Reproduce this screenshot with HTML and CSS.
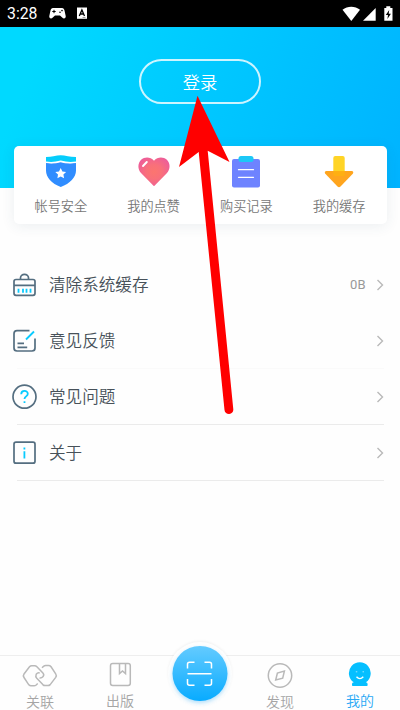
FILE: index.html
```html
<!DOCTYPE html>
<html lang="zh-CN">
<head>
<meta charset="utf-8">
<title>我的</title>
<link rel="stylesheet" href="styles.css">
</head>
<body>
<div class="phone">
  <div class="status">
    <span class="time">3:28</span>
    <svg class="status-left" viewBox="48 5 42 18" width="42" height="18">
      <path d="M53 8h9c1.500 0 2.100 1 2.500 2.500l1.200 5.500c.4 2.500-2 3.200-3.500 1.600L60 15.500h-5L52.800 17.600c-1.500 1.600-3.900.9-3.500-1.600l1.200-5.500C50.900 9 51.500 8 53 8z" fill="#fff"/>
      <path d="M52.300 11.500h3.400M54 9.800v3.400" stroke="#000" stroke-width="1"/>
      <circle cx="60" cy="12.300" r=".8"/><circle cx="62" cy="10.600" r=".8"/>
      <path d="M77 7.500h10v11.300H77z" fill="#fff"/>
      <path d="M79.300 16l2.600-6 2.600 6M80.300 14h3.200" fill="none" stroke="#000" stroke-width="1.300"/>
      <path d="M82.500 17.500h3" stroke="#777" stroke-width=".7"/>
    </svg>
    <svg class="status-right" viewBox="341 4 54 18" width="54" height="18">
      <path d="M342.500 8.800c5-4 12.500-4 17.500 0L351.300 20z" fill="#fff"/>
      <path d="M363 19.700h12.700V7z" fill="#fff"/>
      <path d="M384.300 7h2V5.300h4V7h2.200v12.700h-8.200z" fill="#fff"/>
      <path d="M389.200 9l-3.400 5h2.200l-.6 4 3.500-5.200h-2.200z"/>
    </svg>
  </div>
  <header class="hero"><button class="login">登录</button></header>
  <nav class="card">
    <a class="shortcut">
      <svg viewBox="44 153 34 36" width="34" height="36">
        <path d="M46 157q4.500 0 7.500-.7 4-1 7.200-1t7.200 1q3 .7 8.100.7v5H46z" fill="#05cdfc"/>
        <path d="M46 163q7.500 1.200 14.500-.8 7 2 15.500.8v7.500c0 7-6 13-15.200 16.500C51.500 183.500 46 177.500 46 170.500z" fill="#308dff"/>
        <path d="M45.800 162.200q7.500 1.200 14.900-1 7.500 2.200 15.500 1" fill="none" stroke="#fff" stroke-width="1.200"/>
        <path d="M60.700 168l1.700 3.400 3.700.5-2.700 2.600.7 3.700-3.400-1.700-3.300 1.700.6-3.700-2.700-2.600 3.700-.5z" fill="#fff"/>
      </svg><span>帐号安全</span>
    </a>
    <a class="shortcut">
      <svg viewBox="136.500 153 34 36" width="34" height="36">
        <defs><radialGradient id="heart" cx="50%" cy="50%" r="55%"><stop offset="0" stop-color="#fc756f"/><stop offset=".45" stop-color="#f9707a"/><stop offset="1" stop-color="#ee5e98"/></radialGradient></defs>
        <path d="M153.500 186.300l-13-13.300c-3.500-3.800-3.400-9.800.1-13.200 3.900-3.600 9.500-3 12.900.9 3.400-3.900 9-4.500 12.900-.9 3.500 3.400 3.600 9.400.1 13.200z" fill="url(#heart)"/>
        <path d="M142.500 166l3.800-4" stroke="#fff" stroke-width="1.900" stroke-linecap="round"/>
      </svg><span>我的点赞</span>
    </a>
    <a class="shortcut">
      <svg viewBox="229 153 34 36" width="34" height="36">
        <rect x="232" y="159" width="28" height="28.500" rx="2" fill="#6e83ff"/>
        <rect x="238.500" y="156" width="15" height="6" rx="2.500" fill="#1cc8f7"/>
        <path d="M238.500 169.700h15M238.500 177.300h15" stroke="#fff" stroke-width="1.300" stroke-linecap="round"/>
      </svg><span>购买记录</span>
    </a>
    <a class="shortcut">
      <svg viewBox="322 153 34 36" width="34" height="36">
        <rect x="333.300" y="156" width="11.400" height="21" rx="2" fill="#ffd426"/>
        <path d="M326.300 171h25.500c1.400 0 2 1.500 1 2.700L340.500 186.500q-1.500 1.500-3 0L325.300 173.700c-1-1.200-.4-2.700 1-2.700z" fill="#ffa51e"/>
        <path d="M333.300 171h11.400v4q0 1-1 1h-9.400q-1 0-1-1z" fill="#ffaf12"/>
      </svg><span>我的缓存</span>
    </a>
  </nav>
  <main class="list">
    <div class="row">
      <svg class="row-icon" viewBox="10 271 28 28" width="28" height="28">
        <rect x="14" y="279.500" width="21" height="15.800" rx="2"/>
        <path d="M20.500 279v-1.200a4 3.400 0 0 1 8 0v1.200M14 285.300h21"/>
        <path class="accent" d="M18.500 288.700v4M23 288.700v4M26.500 288.700v4M30.500 288.700v4"/>
      </svg><span class="name">清除系统缓存</span><span class="value">0B</span>
      <svg class="chevron" viewBox="0 0 8 12" width="8" height="12"><path d="M1.500 1l5 5-5 5"/></svg>
    </div>
    <div class="row faint">
      <svg class="row-icon" viewBox="10 327 28 28" width="28" height="28">
        <path d="M29.500 330.700H17q-3 0-3 3V348q0 3 3 3h15q3 0 3-3v-9.500M17.500 343.300h6.500M17.500 347.300h9.700"/>
        <path class="accent" d="M26 339.500l8-8"/>
      </svg><span class="name">意见反馈</span>
      <svg class="chevron" viewBox="0 0 8 12" width="8" height="12"><path d="M1.500 1l5 5-5 5"/></svg>
    </div>
    <div class="row line">
      <svg class="row-icon" viewBox="10 383 28 28" width="28" height="28">
        <circle cx="24.500" cy="396.700" r="11.500"/>
        <path class="accent" d="M21.200 394.200c0-4.300 6.600-4.300 6.600-.4 0 2.600-3.300 2.600-3.300 5.200M24.500 401.200v1.700"/>
      </svg><span class="name">常见问题</span>
      <svg class="chevron" viewBox="0 0 8 12" width="8" height="12"><path d="M1.500 1l5 5-5 5"/></svg>
    </div>
    <div class="row line">
      <svg class="row-icon" viewBox="10 438.500 28 28" width="28" height="28">
        <rect x="14" y="441.700" width="21" height="21" rx="2"/>
        <path class="accent" d="M24.400 447v2M24.400 450.700v7.300"/>
      </svg><span class="name">关于</span>
      <svg class="chevron" viewBox="0 0 8 12" width="8" height="12"><path d="M1.500 1l5 5-5 5"/></svg>
    </div>
  </main>
  <footer class="tabs">
    <a class="tab low">
      <svg viewBox="20 661 40 30" width="40" height="30">
        <path d="M37.700 683.500l-1.500 1.500q-1 .8-2.200.8h-3q-1.200 0-2.200-1l-4.800-7.300q-1.200-1.800 0-3.500l5.500-7.200q1-1 2.200-1h3q1.200 0 2.200 1l6 6.300q1.600 1.800.2 3.400-1.500 1.700-3.600 1.400"/>
        <path d="M42 667.700l1.500-1.300q1-.8 2.200-.8h3q1.200 0 2.200 1l4.800 7.300q1.200 1.800 0 3.500l-5.500 7.200q-1 1-2.200 1h-3q-1.200 0-2.200-1l-6-6.300q-1.600-1.800-.6-4 1.400-1.900 3.500-1.300"/>
      </svg><span>关联</span>
    </a>
    <a class="tab">
      <svg viewBox="100 661 40 30" width="40" height="30">
        <rect x="110.500" y="663.500" width="19.800" height="22" rx="2.200"/>
        <path d="M119.500 663.500v10l3-2.600 3 2.600v-10"/>
      </svg><span>出版</span>
    </a>
    <a class="tab scan">
      <svg viewBox="160 635 80 75" width="80" height="75">
        <defs><linearGradient id="blue" x1="0" y1="0" x2="0" y2="1"><stop offset="0" stop-color="#64cbff"/><stop offset="1" stop-color="#08abff"/></linearGradient></defs>
        <circle class="halo" cx="200" cy="674" r="32"/>
        <circle class="disc" cx="200" cy="673.500" r="27.500"/>
        <path class="scanner" d="M187.500 668.500v-4.300q0-2 2-2h5M204.500 662.200h5q2 0 2 2v4.300M211.500 679v4.300q0 2-2 2h-5M194.500 685.300h-5q-2 0-2-2V679M187.500 673.800h24"/>
      </svg>
    </a>
    <a class="tab low">
      <svg viewBox="260 661 40 30" width="40" height="30">
        <circle cx="280" cy="675.500" r="11.700"/>
        <path d="M275.700 680l1.700-7 7-1.900-1.700 7z"/>
      </svg><span>发现</span>
    </a>
    <a class="tab active">
      <svg viewBox="340 661 40 30" width="40" height="30">
        <path class="solid" d="M353.800 682.300a10.900 10.900 0 1 1 12 0q1.800.3 1.800 1.800v1.200q0 .7-.8.700h-14q-.8 0-.8-.7v-1.200q0-1.500 1.800-1.800z"/>
        <path class="smile" d="M356.500 676.800q3.400 3.600 6.800 0"/>
        <path class="eyes" d="M355.800 671.800h1.500M362.500 671.800h1.500"/>
      </svg><span>我的</span>
    </a>
  </footer>
  <svg class="pointer" viewBox="170 90 70 330" width="70" height="330">
    <path d="M197.500 95.700l32 66.300-21.800-11.200L233.300 409.300a4.400 4.400 0 0 1-8.800.7L198.700 152 179 167z" fill="#f00"/>
  </svg>
</div>
</body>
</html>
```
FILE: styles.css
```css
* { box-sizing: border-box; }
body {
  margin: 0;
  background: #fff;
  font-family: "Noto Sans CJK SC", sans-serif;
  font-weight: 350;
}
.phone {
  position: relative;
  display: flex;
  flex-direction: column;
  width: 400px;
  height: 710px;
  overflow: hidden;
  background: #fefefe;
}
.status {
  display: flex;
  align-items: center;
  height: 27px;
  padding: 0 5px 0 7px;
  background: #000;
  color: #fff;
}
.time {
  width: 41px;
  font: 15.800px/27px Roboto, sans-serif;
}
.status-right { margin-left: auto; }
.hero {
  display: flex;
  justify-content: center;
  align-items: flex-start;
  height: 161px;
  padding-top: 32px;
  background: linear-gradient(112deg, #00d9ff 10%, #00b3ff);
}
.login {
  width: 122px;
  height: 45px;
  padding: 0;
  border: 2px solid rgba(255, 255, 255, .8);
  border-radius: 23px;
  background: none;
  color: #fff;
  font: 350 17.300px/41px "Noto Sans CJK SC", sans-serif;
}
.card {
  display: flex;
  height: 78px;
  margin: -42px 13.500px 0;
  padding: 0 1px;
  border-radius: 5px;
  background: #fff;
  box-shadow: 0 2px 14px rgba(40, 80, 100, .09);
}
.shortcut {
  display: flex;
  flex: 1;
  flex-direction: column;
  align-items: center;
  padding-top: 7px;
  color: #777;
  font-size: 13.200px;
  line-height: 20px;
}
.shortcut svg { flex: none; }
.shortcut span { margin-top: 7px; }
.list { margin: 33px 16.500px 0; }
.row {
  display: flex;
  align-items: center;
  height: 56px;
  border-bottom: 1px solid transparent;
}
.faint { border-color: #fafafa; }
.line { border-color: #ebebeb; }
.row-icon { margin-left: -6.500px; }
.row-icon * {
  fill: none;
  stroke: #546e80;
  stroke-width: 1.700;
}
.row-icon .accent {
  stroke: #08cbff;
  stroke-width: 1.800;
}
.name {
  margin: -1px 0 0 11px;
  color: #475159;
  font-size: 16.600px;
}
.value {
  margin-left: auto;
  color: #999;
  font: 13px Roboto, sans-serif;
}
.chevron { margin-left: auto; }
.value + .chevron { margin-left: 10px; }
.chevron path {
  fill: none;
  stroke: #b9b9b9;
  stroke-width: 1.400;
}
.tabs {
  display: flex;
  height: 55px;
  margin-top: auto;
  border-top: 1px solid #eee;
}
.tab {
  display: flex;
  flex: 1;
  flex-direction: column;
  align-items: center;
  padding-top: 5px;
  color: #a5a5a5;
  font-size: 14px;
  line-height: 16px;
}
.tab > svg { flex: none; }
.tab span { margin-top: 1px; }
.tab.low span { margin-top: 2px; }
.tab svg * {
  fill: none;
  stroke: #b9b9b9;
  stroke-width: 1.500;
}
.scan {
  margin-top: -21px;
  padding: 0;
}
.scan .halo {
  fill: #fefefe;
  stroke: none;
  filter: drop-shadow(0 -1px 1px rgba(0, 0, 0, .05));
}
.scan .disc {
  fill: url(#blue);
  stroke: none;
  filter: drop-shadow(0 2px 2px rgba(0, 150, 240, .3));
}
.scan .scanner { stroke: #fff; }
.tab.active { color: #28a8f5; }
.active .solid {
  fill: #05bfff;
  stroke: none;
}
.active .smile {
  stroke: #fff;
  stroke-width: 1.400;
}
.active .eyes {
  stroke: #9be5ff;
  stroke-width: 1;
}
.pointer {
  position: absolute;
  top: 90px;
  left: 170px;
}
```
